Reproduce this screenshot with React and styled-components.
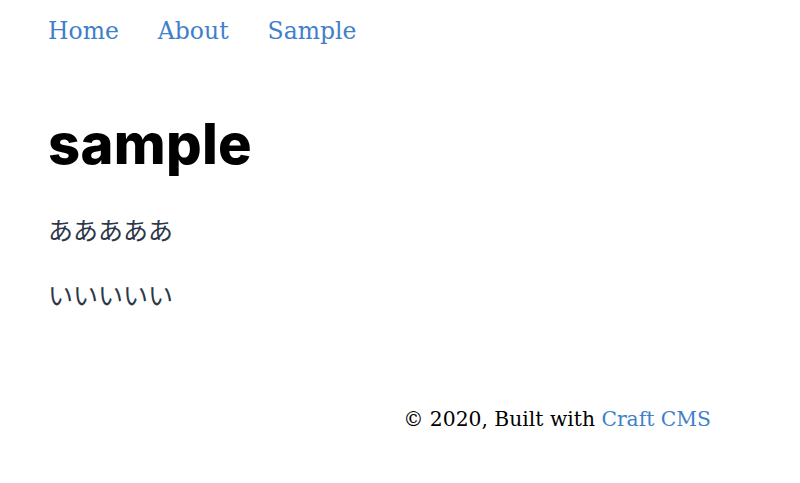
import React from "react";
import styled, { createGlobalStyle } from "styled-components";

const GlobalStyle = createGlobalStyle`
  html, body {
    margin: 0;
    padding: 0;
    background: #ffffff;
  }
  body {
    font-family: "DejaVu Serif", "Liberation Serif", serif;
  }
`;

const Page = styled.div`
  width: 800px;
  min-height: 483px;
  display: flex;
  flex-direction: column;
  box-sizing: border-box;
  padding: 0 48px;
`;

const Nav = styled.nav`
  display: flex;
  gap: 39px;
  padding-top: 15px;
`;

const NavLink = styled.a`
  color: #3f7fca;
  font-size: 23.5px;
  line-height: 32px;
  text-decoration: none;
`;

const Main = styled.main`
  padding-top: 65px;
`;

const Title = styled.h1`
  margin: 0;
  font-family: "Inter", "Noto Sans", sans-serif;
  font-weight: 800;
  font-size: 56px;
  line-height: 64px;
  color: #000000;
  letter-spacing: 0.3px;
`;

const Para = styled.p`
  margin: ${(p) => p.$top}px 0 0;
  font-family: "Noto Sans CJK JP", sans-serif;
  font-size: 25px;
  line-height: 34px;
  color: #2d3748;
`;

const Footer = styled.footer`
  display: flex;
  justify-content: flex-end;
  padding: 93px 41px 0 0;
  font-size: 20.3px;
  line-height: 30px;
  color: #000000;
`;

const FooterLink = styled.a`
  color: #3f7fca;
  text-decoration: none;
`;

export default function App() {
  return (
    <>
      <GlobalStyle />
      <Page>
        <Nav>
          <NavLink href="#">Home</NavLink>
          <NavLink href="#">About</NavLink>
          <NavLink href="#">Sample</NavLink>
        </Nav>
        <Main>
          <Title>sample</Title>
          <Para $top={36}>あああああ</Para>
          <Para $top={31}>いいいいい</Para>
        </Main>
        <Footer>
          <span>
            © 2020, Built with <FooterLink href="#">Craft CMS</FooterLink>
          </span>
        </Footer>
      </Page>
    </>
  );
}
